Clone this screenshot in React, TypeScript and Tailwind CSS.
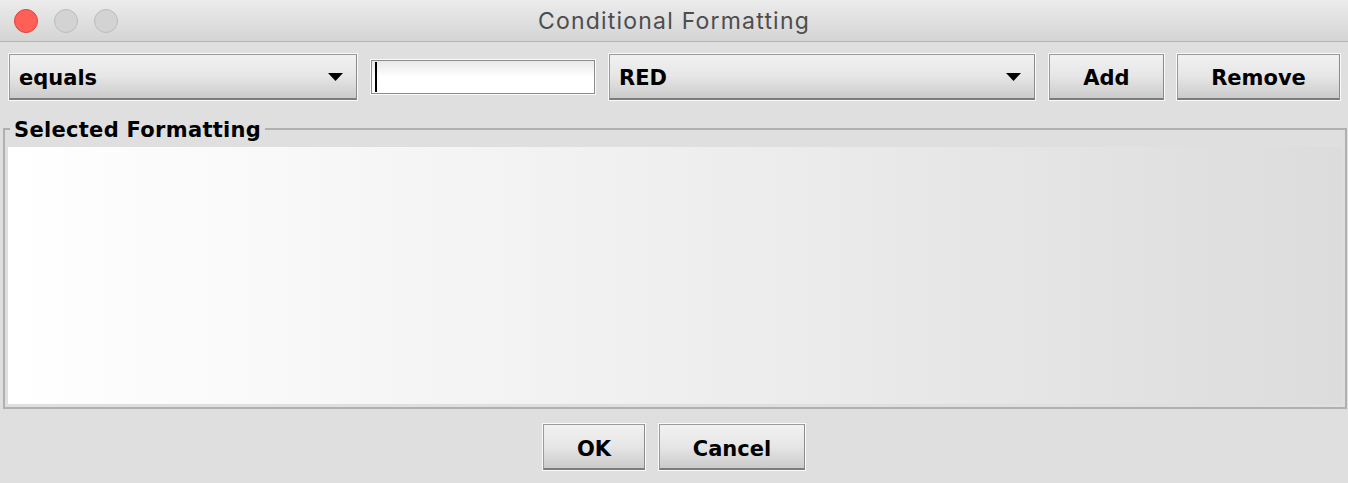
import React from 'react';

const FONT = { fontFamily: '"DejaVu Sans", "Liberation Sans", sans-serif' };

function Raised({ className = '', children }: { className?: string; children: React.ReactNode }) {
  return (
    <div className={`border border-[#fafafa] ${className}`}>
      <div className="h-full border border-[#9a9a9a] border-r-[#8a8a8a] border-b-2 border-b-[#7c7c7c] bg-gradient-to-b from-[#f1f1f1] via-[#e6e6e6] to-[#cbcbcb] flex items-center">
        {children}
      </div>
    </div>
  );
}

function Combo({ label, width }: { label: string; width: string }) {
  return (
    <Raised className={`${width} h-[48px]`}>
      <span className="pl-[9px] pt-[4px] flex-1 text-[21px] font-bold text-black leading-none">{label}</span>
      <svg width="15" height="8" viewBox="0 0 15 8" className="mr-[13px] mt-[2px]">
        <polygon points="0,0 15,0 7.5,8" fill="#000" />
      </svg>
    </Raised>
  );
}

function Button({ label, width }: { label: string; width: string }) {
  return (
    <Raised className={`${width} h-[48px]`}>
      <span className="w-full text-center text-[21px] font-bold text-black leading-none pt-[5px]">{label}</span>
    </Raised>
  );
}

export default function App() {
  return (
    <div className="w-[1348px] h-[483px] bg-[#dfdfdf] flex flex-col overflow-hidden" style={FONT}>
      {/* title bar */}
      <div className="relative h-[42px] shrink-0 bg-gradient-to-b from-[#ececec] to-[#d4d4d4] border-b border-[#b3b3b3] flex items-center">
        <div className="flex gap-[16px] pl-[14px]">
          <span className="w-[24px] h-[24px] rounded-full bg-[#fe5f57] border border-[#e0443e]" />
          <span className="w-[24px] h-[24px] rounded-full bg-[#d3d3d3] border border-[#bcbcbc]" />
          <span className="w-[24px] h-[24px] rounded-full bg-[#d3d3d3] border border-[#bcbcbc]" />
        </div>
        <div
          className="absolute inset-0 flex items-center justify-center text-[23px] tracking-[1.2px] text-[#4d4d4d] pt-[1px]"
          style={{ fontFamily: '"Inter", "Liberation Sans", sans-serif' }}
        >
          Conditional Formatting
        </div>
      </div>

      {/* toolbar */}
      <div className="flex items-center pl-[8px] pt-[10px] h-[59px] shrink-0">
        <Combo label="equals" width="w-[350px]" />
        <div className="ml-[12px] w-[226px] h-[36px] border border-[#fafafa]">
          <div className="h-full border border-[#8c8c8c] bg-gradient-to-b from-[#e9e9e9] via-white to-white flex items-center pl-[3px]">
            <span className="w-[2px] h-[30px] bg-black" />
          </div>
        </div>
        <Combo label="RED" width="ml-[12px] w-[428px]" />
        <Button label="Add" width="ml-[12px] w-[117px]" />
        <Button label="Remove" width="ml-[11px] w-[165px]" />
      </div>

      {/* group box */}
      <div className="relative ml-[3px] mt-[27px] w-[1344px] h-[281px] border-2 border-[#b0b0b0] px-[3px] pt-[17px] pb-[3px]">
        <span className="absolute -top-[12px] left-[5px] px-[4px] bg-[#dfdfdf] text-[21px] tracking-[0.3px] font-bold text-black leading-[24px]">
          Selected Formatting
        </span>
        <div className="h-full bg-gradient-to-r from-white via-[#efefef] to-[#dcdcdc]" />
      </div>

      {/* footer */}
      <div className="flex justify-center gap-[12px] mt-[14px]">
        <Button label="OK" width="w-[104px]" />
        <Button label="Cancel" width="w-[148px]" />
      </div>
    </div>
  );
}
